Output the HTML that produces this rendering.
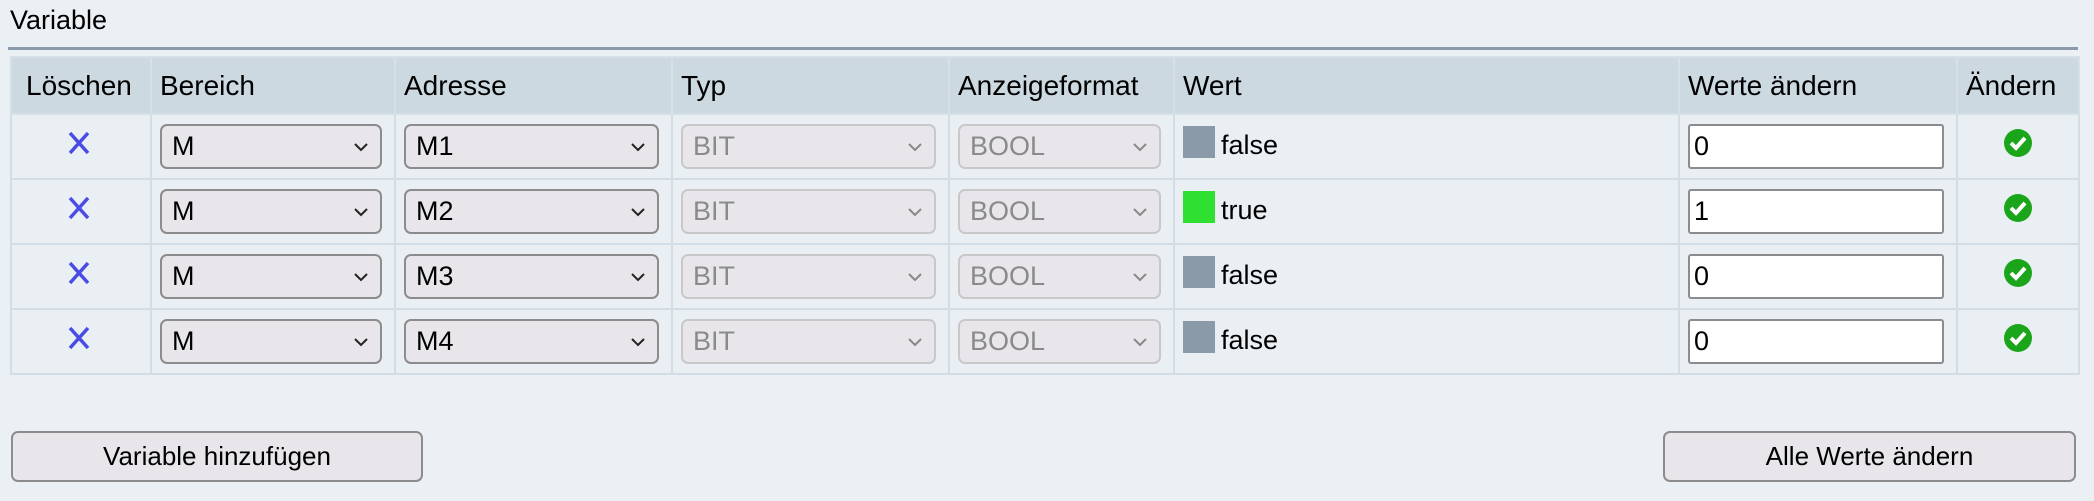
<!DOCTYPE html>
<html><head><meta charset="utf-8"><style>
body{margin:0;width:2094px;height:501px;background:#ebf0f4;font-family:"Liberation Sans",sans-serif;color:#000;position:relative;overflow:hidden}
.t{position:absolute;left:10px;top:5px;font-size:27px}
.hr{position:absolute;left:8px;top:47px;width:2070px;height:3px;background:#8a9aaa}
table{position:absolute;left:10px;top:56px;border-collapse:collapse;width:2068px;table-layout:fixed}
th{background:#ccd9e1;font-weight:normal;font-size:28px;text-align:left;padding:0 8px;height:55px;border:2px solid #d6e0e7;white-space:nowrap;overflow:hidden}
td{height:63px;border:2px solid #d3dde5;padding:0 12px 0 8px;background:#eaeff4;font-size:27px;position:relative}
.sel{border:2px solid #8c8c8c;border-radius:7px;background:#e8e6ea;box-sizing:border-box;height:45px;position:relative;line-height:41px;padding-left:10px;font-size:27px}
.sel.d{border-color:#c8c8c8;color:#8a8a8a}
.sel svg{position:absolute;right:12px;top:16px}
.sq{display:inline-block;width:32px;height:32px;vertical-align:middle;margin-right:6px;position:relative;top:-5px}
.inp{height:45px;border:2px solid #8c8c8c;border-radius:3px;background:#fff;box-sizing:border-box;line-height:41px;padding-left:4px}
.btn{position:absolute;top:431px;height:51px;border:2px solid #8c8c8c;border-radius:7px;background:#e8e6ea;box-sizing:border-box;text-align:center;line-height:47px;font-size:26px}
</style></head><body>
<div class="t">Variable</div><div class="hr"></div>
<table>
<colgroup><col style="width:140px"><col style="width:244px"><col style="width:277px"><col style="width:277px"><col style="width:225px"><col style="width:505px"><col style="width:278px"><col style="width:122px"></colgroup>
<tr><th style="padding-left:14px">Löschen</th><th>Bereich</th><th>Adresse</th><th>Typ</th><th>Anzeigeformat</th><th>Wert</th><th>Werte ändern</th><th>Ändern</th></tr>
<tr><td style="text-align:center"><svg width="26" height="26" viewBox="0 0 26 26"><path d="M4 3L22 23M22 3L4 23" stroke="#4a4ae6" stroke-width="3.5"/></svg></td><td><div class="sel">M<svg width="14" height="10"><path d="M1 2l6 6 6-6" fill="none" stroke="#222" stroke-width="2"/></svg></div></td><td><div class="sel">M1<svg width="14" height="10"><path d="M1 2l6 6 6-6" fill="none" stroke="#222" stroke-width="2"/></svg></div></td><td><div class="sel d">BIT<svg width="14" height="10"><path d="M1 2l6 6 6-6" fill="none" stroke="#888" stroke-width="2"/></svg></div></td><td><div class="sel d">BOOL<svg width="14" height="10"><path d="M1 2l6 6 6-6" fill="none" stroke="#888" stroke-width="2"/></svg></div></td><td><span class="sq" style="background:#8a9aa8"></span>false</td><td><div class="inp">0</div></td><td style="text-align:center;padding:0"><svg width="30" height="30" viewBox="0 0 30 30"><circle cx="15" cy="15" r="14" fill="#1aa51a"/><path d="M8 15l5 5 9-10" fill="none" stroke="#fff" stroke-width="4"/></svg></td></tr>
<tr><td style="text-align:center"><svg width="26" height="26" viewBox="0 0 26 26"><path d="M4 3L22 23M22 3L4 23" stroke="#4a4ae6" stroke-width="3.5"/></svg></td><td><div class="sel">M<svg width="14" height="10"><path d="M1 2l6 6 6-6" fill="none" stroke="#222" stroke-width="2"/></svg></div></td><td><div class="sel">M2<svg width="14" height="10"><path d="M1 2l6 6 6-6" fill="none" stroke="#222" stroke-width="2"/></svg></div></td><td><div class="sel d">BIT<svg width="14" height="10"><path d="M1 2l6 6 6-6" fill="none" stroke="#888" stroke-width="2"/></svg></div></td><td><div class="sel d">BOOL<svg width="14" height="10"><path d="M1 2l6 6 6-6" fill="none" stroke="#888" stroke-width="2"/></svg></div></td><td><span class="sq" style="background:#30e030"></span>true</td><td><div class="inp">1</div></td><td style="text-align:center;padding:0"><svg width="30" height="30" viewBox="0 0 30 30"><circle cx="15" cy="15" r="14" fill="#1aa51a"/><path d="M8 15l5 5 9-10" fill="none" stroke="#fff" stroke-width="4"/></svg></td></tr>
<tr><td style="text-align:center"><svg width="26" height="26" viewBox="0 0 26 26"><path d="M4 3L22 23M22 3L4 23" stroke="#4a4ae6" stroke-width="3.5"/></svg></td><td><div class="sel">M<svg width="14" height="10"><path d="M1 2l6 6 6-6" fill="none" stroke="#222" stroke-width="2"/></svg></div></td><td><div class="sel">M3<svg width="14" height="10"><path d="M1 2l6 6 6-6" fill="none" stroke="#222" stroke-width="2"/></svg></div></td><td><div class="sel d">BIT<svg width="14" height="10"><path d="M1 2l6 6 6-6" fill="none" stroke="#888" stroke-width="2"/></svg></div></td><td><div class="sel d">BOOL<svg width="14" height="10"><path d="M1 2l6 6 6-6" fill="none" stroke="#888" stroke-width="2"/></svg></div></td><td><span class="sq" style="background:#8a9aa8"></span>false</td><td><div class="inp">0</div></td><td style="text-align:center;padding:0"><svg width="30" height="30" viewBox="0 0 30 30"><circle cx="15" cy="15" r="14" fill="#1aa51a"/><path d="M8 15l5 5 9-10" fill="none" stroke="#fff" stroke-width="4"/></svg></td></tr>
<tr><td style="text-align:center"><svg width="26" height="26" viewBox="0 0 26 26"><path d="M4 3L22 23M22 3L4 23" stroke="#4a4ae6" stroke-width="3.5"/></svg></td><td><div class="sel">M<svg width="14" height="10"><path d="M1 2l6 6 6-6" fill="none" stroke="#222" stroke-width="2"/></svg></div></td><td><div class="sel">M4<svg width="14" height="10"><path d="M1 2l6 6 6-6" fill="none" stroke="#222" stroke-width="2"/></svg></div></td><td><div class="sel d">BIT<svg width="14" height="10"><path d="M1 2l6 6 6-6" fill="none" stroke="#888" stroke-width="2"/></svg></div></td><td><div class="sel d">BOOL<svg width="14" height="10"><path d="M1 2l6 6 6-6" fill="none" stroke="#888" stroke-width="2"/></svg></div></td><td><span class="sq" style="background:#8a9aa8"></span>false</td><td><div class="inp">0</div></td><td style="text-align:center;padding:0"><svg width="30" height="30" viewBox="0 0 30 30"><circle cx="15" cy="15" r="14" fill="#1aa51a"/><path d="M8 15l5 5 9-10" fill="none" stroke="#fff" stroke-width="4"/></svg></td></tr>
</table>
<div class="btn" style="left:11px;width:412px">Variable hinzufügen</div>
<div class="btn" style="left:1663px;width:413px">Alle Werte ändern</div>
</body></html>
